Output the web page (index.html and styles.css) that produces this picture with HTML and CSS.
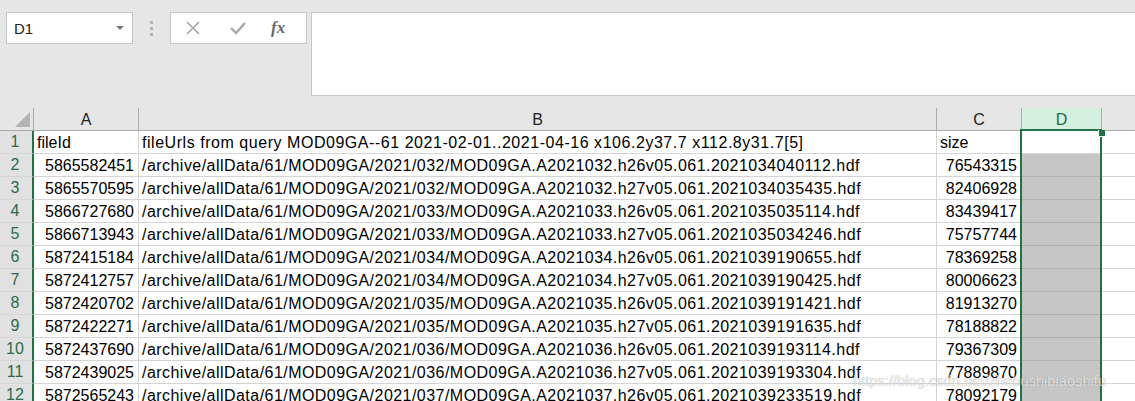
FILE: index.html
```html
<!DOCTYPE html>
<html>
<head>
<meta charset="utf-8">
<link rel="stylesheet" href="styles.css">
</head>
<body>
<div class="app">
  <div class="fbar">
    <div class="namebox"><span class="nb-text">D1</span><span class="nb-caret"></span></div>
    <div class="grip"><i></i><i></i><i></i></div>
    <div class="btns">
      <svg class="ico" width="20" height="20" viewBox="0 0 20 20"><path d="M4 4 L16 16 M16 4 L4 16" stroke="#a6a6a6" stroke-width="1.6" fill="none"/></svg>
      <svg class="ico" width="20" height="20" viewBox="0 0 20 20"><path d="M3 10 L8 15 L17 5" stroke="#a6a6a6" stroke-width="2.4" fill="none"/></svg>
      <span class="fx">fx</span>
    </div>
    <div class="finput"></div>
  </div>
  <div class="sheet">
    <div class="corner"><span class="tri"></span></div>
    <div class="ch">A</div>
    <div class="ch">B</div>
    <div class="ch">C</div>
    <div class="ch chsel">D</div>
    <div class="ch last"></div>

    <div class="rh">1</div><div class="c">fileId</div><div class="c w">fileUrls from query MOD09GA--61 2021-02-01..2021-04-16 x106.2y37.7 x112.8y31.7[5]</div><div class="c">size</div><div class="c dact"></div><div class="c last"></div>
    <div class="rh">2</div><div class="c n">5865582451</div><div class="c u">/archive/allData/61/MOD09GA/2021/032/MOD09GA.A2021032.h26v05.061.2021034040112.hdf</div><div class="c n">76543315</div><div class="c dsel"></div><div class="c last"></div>
    <div class="rh">3</div><div class="c n">5865570595</div><div class="c u">/archive/allData/61/MOD09GA/2021/032/MOD09GA.A2021032.h27v05.061.2021034035435.hdf</div><div class="c n">82406928</div><div class="c dsel"></div><div class="c last"></div>
    <div class="rh">4</div><div class="c n">5866727680</div><div class="c u">/archive/allData/61/MOD09GA/2021/033/MOD09GA.A2021033.h26v05.061.2021035035114.hdf</div><div class="c n">83439417</div><div class="c dsel"></div><div class="c last"></div>
    <div class="rh">5</div><div class="c n">5866713943</div><div class="c u">/archive/allData/61/MOD09GA/2021/033/MOD09GA.A2021033.h27v05.061.2021035034246.hdf</div><div class="c n">75757744</div><div class="c dsel"></div><div class="c last"></div>
    <div class="rh">6</div><div class="c n">5872415184</div><div class="c u">/archive/allData/61/MOD09GA/2021/034/MOD09GA.A2021034.h26v05.061.2021039190655.hdf</div><div class="c n">78369258</div><div class="c dsel"></div><div class="c last"></div>
    <div class="rh">7</div><div class="c n">5872412757</div><div class="c u">/archive/allData/61/MOD09GA/2021/034/MOD09GA.A2021034.h27v05.061.2021039190425.hdf</div><div class="c n">80006623</div><div class="c dsel"></div><div class="c last"></div>
    <div class="rh">8</div><div class="c n">5872420702</div><div class="c u">/archive/allData/61/MOD09GA/2021/035/MOD09GA.A2021035.h26v05.061.2021039191421.hdf</div><div class="c n">81913270</div><div class="c dsel"></div><div class="c last"></div>
    <div class="rh">9</div><div class="c n">5872422271</div><div class="c u">/archive/allData/61/MOD09GA/2021/035/MOD09GA.A2021035.h27v05.061.2021039191635.hdf</div><div class="c n">78188822</div><div class="c dsel"></div><div class="c last"></div>
    <div class="rh">10</div><div class="c n">5872437690</div><div class="c u">/archive/allData/61/MOD09GA/2021/036/MOD09GA.A2021036.h26v05.061.2021039193114.hdf</div><div class="c n">79367309</div><div class="c dsel"></div><div class="c last"></div>
    <div class="rh">11</div><div class="c n">5872439025</div><div class="c u">/archive/allData/61/MOD09GA/2021/036/MOD09GA.A2021036.h27v05.061.2021039193304.hdf</div><div class="c n">77889870</div><div class="c dsel"></div><div class="c last"></div>
    <div class="rh">12</div><div class="c n">5872565243</div><div class="c u">/archive/allData/61/MOD09GA/2021/037/MOD09GA.A2021037.h26v05.061.2021039233519.hdf</div><div class="c n">78092179</div><div class="c dsel"></div><div class="c last"></div>

    <div class="selbox"><span class="handle"></span></div>
    <div class="wm">https://blog.csdn.net/zhebushibiaoshifu</div>
  </div>
</div>
</body>
</html>
```
FILE: styles.css
```css
html, body {
  margin: 0;
  padding: 0;
  background: #e6e6e6;
  overflow: hidden;
}
.app {
  width: 1135px;
  height: 401px;
  overflow: hidden;
  font-family: "Liberation Sans", Arial, sans-serif;
}
.fbar {
  display: flex;
  align-items: flex-start;
  padding: 12px 0 0 6px;
  height: 96px;
  box-sizing: border-box;
}
.namebox {
  width: 127px;
  height: 32px;
  box-sizing: border-box;
  border: 1px solid #c6c6c6;
  background: #fff;
  display: flex;
  align-items: center;
  justify-content: space-between;
  padding: 0 8px 0 7px;
}
.nb-text {
  font-size: 15px;
  color: #222;
}
.nb-caret {
  width: 0;
  height: 0;
  border-left: 4px solid transparent;
  border-right: 4px solid transparent;
  border-top: 4px solid #7a7a7a;
}
.grip {
  width: 37px;
  height: 32px;
  display: flex;
  flex-direction: column;
  align-items: center;
  justify-content: center;
  gap: 3px;
}
.grip i {
  display: block;
  width: 3px;
  height: 3px;
  background: #b4b4b4;
}
.btns {
  width: 137px;
  height: 32px;
  box-sizing: border-box;
  border: 1px solid #c6c6c6;
  background: #fff;
  display: flex;
  align-items: center;
  padding-left: 12px;
  gap: 25px;
}
.fx {
  font-family: "Liberation Serif", "Times New Roman", serif;
  font-style: italic;
  font-weight: bold;
  font-size: 17px;
  color: #6a6a6a;
  margin-left: -2px;
}
.finput {
  flex: 1;
  margin-left: 4px;
  margin-right: -2px;
  height: 84px;
  box-sizing: border-box;
  border: 1px solid #c6c6c6;
  background: #fff;
}
.sheet {
  position: relative;
  margin-top: 12px;
  display: grid;
  grid-template-columns: 34px 105px 798px 85px 80px 1fr;
  grid-auto-rows: 23px;
  font-size: 16px;
  color: #000;
}
.corner, .ch {
  background: #e6e6e6;
  border-right: 1px solid #ababab;
  border-bottom: 1px solid #ababab;
  box-sizing: border-box;
}
.corner {
  position: relative;
}
.tri {
  position: absolute;
  right: 3px;
  bottom: 3px;
  width: 0;
  height: 0;
  border-left: 15px solid transparent;
  border-bottom: 15px solid #b4b4b4;
}
.ch {
  display: flex;
  align-items: flex-end;
  justify-content: center;
  line-height: 20px;
  color: #222;
}
.ch.chsel {
  background: #d3f0e0;
  color: #1e6e42;
}
.ch.last {
  border-right: none;
}
.rh {
  background: #e1e1e1;
  border-right: 2px solid #217346;
  border-bottom: 1px solid #d6d6d6;
  box-sizing: border-box;
  text-align: center;
  line-height: 22px;
  color: #2b6b4a;
  padding-right: 2px;
}
.c {
  background: #fff;
  border-right: 1px solid #d4d4d4;
  border-bottom: 1px solid #d4d4d4;
  box-sizing: border-box;
  line-height: 22px;
  padding: 1px 4px 0 3px;
  white-space: nowrap;
  overflow: visible;
}
.c.w {
  letter-spacing: 0.54px;
}
.c.u {
  letter-spacing: 0.46px;
}
.c.n {
  text-align: right;
}
.c.last {
  border-right: none;
}
.c.dsel {
  background: #c6c6c6;
  border-bottom-color: #b0b0b0;
  border-right-color: #c6c6c6;
}
.selbox {
  position: absolute;
  left: 1020px;
  top: 21px;
  width: 82px;
  height: 300px;
  box-sizing: border-box;
  border: 2px solid #217346;
}
.handle {
  position: absolute;
  right: -5px;
  top: -1px;
  width: 6px;
  height: 6px;
  background: #217346;
  border-left: 1px solid #fff;
  border-bottom: 1px solid #fff;
}
.wm {
  position: absolute;
  left: 853px;
  top: 265px;
  font-size: 14.7px;
  color: rgba(255, 255, 255, 0.75);
  text-shadow: 0 0 1px rgba(0, 0, 0, 0.35);
  white-space: nowrap;
}
```
